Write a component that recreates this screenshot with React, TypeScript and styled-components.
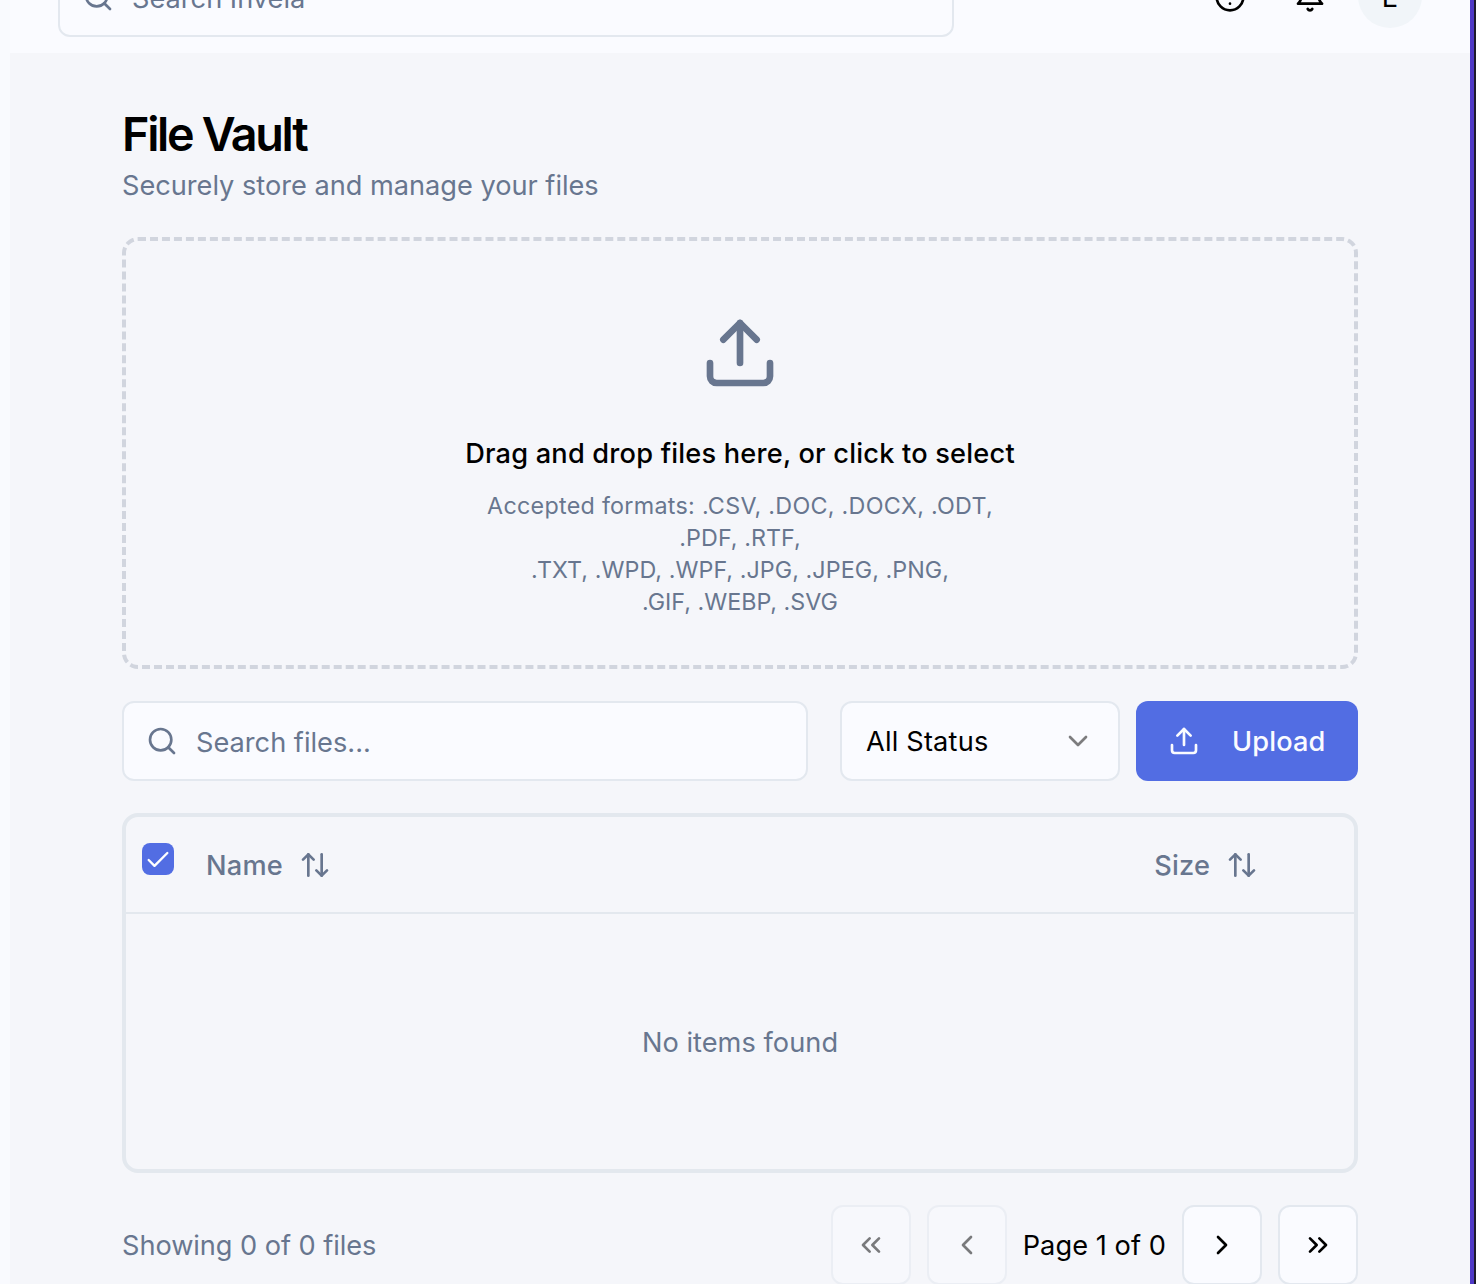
import React from "react";
import styled, { createGlobalStyle } from "styled-components";
import {
  ArrowUpDown, Check, ChevronDown, ChevronLeft, ChevronRight,
  ChevronsLeft, ChevronsRight, Search,
} from "lucide-react";

const GlobalStyle = createGlobalStyle`
  *, *::before, *::after { box-sizing: border-box; }
  body { margin: 0; overflow: hidden; background: #f9fafe; }
  button { font: inherit; }
  svg { display: block; flex: none; }
`;

const Shell = styled.div`
  display: flex;
  width: 1476px;
  height: 1284px;
  overflow: hidden;
  font-family: Inter, "Liberation Sans", sans-serif;
  font-size: 27.2px;
  line-height: 40px;
  color: #000;
`;

const Sidebar = styled.div`
  width: 10px;
  background: #f9fafe;
`;

const Content = styled.div`
  flex: 1;
  display: flex;
  flex-direction: column;
  min-width: 0;
  background: #f5f6fa;
`;

const WindowEdge = styled.div`
  width: 6px;
  background: #1e1b2b;
  border-left: 4px solid #4f39c6;
`;

const Header = styled.header`
  flex: none;
  display: flex;
  align-items: center;
  justify-content: space-between;
  height: 112px;
  margin-top: -59px;
  padding: 0 48px;
  background: #fafbff;
`;

const SearchBox = styled.label<{ $width: number }>`
  display: flex;
  align-items: center;
  gap: 18px;
  width: ${(p) => p.$width}px;
  height: 80px;
  padding: 0 22px;
  border: 2px solid #e3e8ef;
  border-radius: 12px;
  background: #fafbff;
  color: #68768f;
`;

const SearchInput = styled.input`
  flex: 1;
  min-width: 0;
  height: 40px;
  margin-top: 3px;
  padding: 0;
  border: 0;
  outline: 0;
  background: none;
  font: inherit;
  &::placeholder { color: #68768f; opacity: 1; }
`;

const HeaderActions = styled.div`
  display: flex;
  align-items: center;
`;

const IconButton = styled.button`
  display: grid;
  place-items: center;
  width: 80px;
  height: 80px;
  padding: 0;
  border: 0;
  background: none;
  color: inherit;
`;

const Avatar = styled.div`
  display: grid;
  place-items: center;
  width: 64px;
  height: 64px;
  margin: 0 0 2px 8px;
  padding-top: 3px;
  border-radius: 50%;
  background: #f1f5f9;
`;

const Main = styled.main`
  display: flex;
  flex-direction: column;
  padding: 49px 112px 0;
`;

const Title = styled.h1`
  margin: 0;
  font-size: 46.7px;
  line-height: 64px;
  font-weight: 600;
  letter-spacing: -2.3px;
`;

const Label = styled.span<{ $tracking?: number }>`
  letter-spacing: ${(p) => p.$tracking ?? 0}px;
  padding-top: 1px;
`;

const Subtitle = styled.p`
  margin: -0.5px 0 31.5px;
  color: #68768f;
  letter-spacing: -0.02px;
`;

const DropZone = styled.section`
  display: flex;
  flex-direction: column;
  align-items: center;
  height: 432px;
  padding-top: 72px;
  border: 4px dashed #d1d5de;
  border-radius: 16px;
  text-align: center;
  color: #68768f;
`;

const DropTitle = styled.p`
  margin: 40.5px 0 16px;
  font-weight: 500;
  letter-spacing: 0.2px;
  color: #000;
`;

const FormatLine = styled.span<{ $tracking: number }>`
  font-size: 23.3px;
  line-height: 32px;
  letter-spacing: ${(p) => p.$tracking}px;
`;

const Toolbar = styled.div`
  display: flex;
  margin: 32px 0;
`;

const StatusSelect = styled.button`
  display: flex;
  align-items: center;
  justify-content: space-between;
  width: 280px;
  height: 80px;
  margin: 0 16px 0 32px;
  padding: 0 24px;
  border: 2px solid #e3e8ef;
  border-radius: 12px;
  background: #fafbff;
  color: #000;
  svg { opacity: 0.5; }
`;

const UploadButton = styled.button`
  display: flex;
  align-items: center;
  gap: 32px;
  width: 222px;
  height: 80px;
  padding: 0 32px;
  border: 0;
  border-radius: 12px;
  background: #526de3;
  color: #fafbff;
  font-weight: 500;
`;

const Table = styled.section`
  height: 360px;
  border: 4px solid #e3e8ee;
  border-radius: 16px;
  color: #68768f;
`;

const TableHead = styled.div`
  display: flex;
  align-items: center;
  height: 97px;
  padding: 0 96px 0 16px;
  border-bottom: 2px solid #e3e8ee;
`;

const Checkbox = styled.span`
  display: grid;
  place-items: center;
  width: 32px;
  height: 32px;
  margin: 0 32px 12px 0;
  padding-top: 3px;
  border-radius: 8px;
  background: #526de3;
  color: #fff;
`;

const ColumnHead = styled.span<{ $grow?: boolean }>`
  display: flex;
  align-items: center;
  gap: 16px;
  flex: ${(p) => (p.$grow ? 1 : "none")};
  font-weight: 500;
  ${Label} { padding-top: 2px; }
`;

const EmptyState = styled.div`
  display: grid;
  place-items: center;
  height: 256px;
`;

const Footer = styled.footer`
  display: flex;
  align-items: center;
  justify-content: space-between;
  margin-top: 32px;
  color: #68768f;
`;

const Pager = styled.div`
  display: flex;
  align-items: center;
  gap: 16px;
  color: #000;
`;

const PageButton = styled.button`
  display: grid;
  place-items: center;
  width: 80px;
  height: 80px;
  padding: 0;
  border: 2px solid #e3e8ef;
  border-radius: 12px;
  background: #fafbff;
  color: #000;
  &:disabled { opacity: 0.5; }
`;

const StrokeIcon = ({ size, children }: { size: number; children: React.ReactNode }) => (
  <svg width={size} height={size} viewBox="0 0 24 24" fill="none" stroke="currentColor"
    strokeWidth={2} strokeLinecap="round" strokeLinejoin="round">
    {children}
  </svg>
);

const UploadIcon = ({ size }: { size: number }) => (
  <StrokeIcon size={size}>
    <path d="M21 15v4a2 2 0 0 1-2 2H5a2 2 0 0 1-2-2v-4" />
    <path d="m17 8-5-5-5 5" />
    <path d="M12 3v12" />
  </StrokeIcon>
);

const HelpIcon = () => (
  <StrokeIcon size={32}>
    <circle cx="12" cy="12" r="10" />
    <path d="M9.09 9a3 3 0 0 1 5.83 1c0 2-3 3-3 3" />
    <path d="M12 17h.01" />
  </StrokeIcon>
);

const BellIcon = () => (
  <StrokeIcon size={32}>
    <path d="M6 8a6 6 0 0 1 12 0c0 7 3 9 3 9H3s3-2 3-9" />
    <path d="M10.3 21a1.94 1.94 0 0 0 3.4 0" />
  </StrokeIcon>
);

export default function App() {
  return (
    <Shell>
      <GlobalStyle />
      <Sidebar />
      <Content>
        <Header>
          <SearchBox $width={896}>
            <Search size={32} />
            <SearchInput placeholder="Search Invela" />
          </SearchBox>
          <HeaderActions>
            <IconButton><HelpIcon /></IconButton>
            <IconButton><BellIcon /></IconButton>
            <Avatar>E</Avatar>
          </HeaderActions>
        </Header>
        <Main>
          <Title>File Vault</Title>
          <Subtitle>Securely store and manage your files</Subtitle>
          <DropZone>
            <UploadIcon size={80} />
            <DropTitle>Drag and drop files here, or click to select</DropTitle>
            <FormatLine $tracking={0.28}>Accepted formats: .CSV, .DOC, .DOCX, .ODT,</FormatLine>
            <FormatLine $tracking={0.05}>.PDF, .RTF,</FormatLine>
            <FormatLine $tracking={0.06}>.TXT, .WPD, .WPF, .JPG, .JPEG, .PNG,</FormatLine>
            <FormatLine $tracking={0}>.GIF, .WEBP, .SVG</FormatLine>
          </DropZone>
          <Toolbar>
            <SearchBox $width={686}>
              <Search size={32} />
              <SearchInput placeholder="Search files..." />
            </SearchBox>
            <StatusSelect>
              <Label $tracking={0.18}>All Status</Label>
              <ChevronDown size={32} />
            </StatusSelect>
            <UploadButton>
              <UploadIcon size={32} />
              <Label $tracking={0.12}>Upload</Label>
            </UploadButton>
          </Toolbar>
          <Table>
            <TableHead>
              <Checkbox><Check size={28} /></Checkbox>
              <ColumnHead $grow><Label $tracking={0.2}>Name</Label><ArrowUpDown size={32} /></ColumnHead>
              <ColumnHead><Label $tracking={0.15}>Size</Label><ArrowUpDown size={32} /></ColumnHead>
            </TableHead>
            <EmptyState><Label $tracking={0.04}>No items found</Label></EmptyState>
          </Table>
          <Footer>
            <Label $tracking={-0.06}>Showing 0 of 0 files</Label>
            <Pager>
              <PageButton disabled><ChevronsLeft size={32} /></PageButton>
              <PageButton disabled><ChevronLeft size={32} /></PageButton>
              <Label $tracking={0.06}>Page 1 of 0</Label>
              <PageButton><ChevronRight size={32} /></PageButton>
              <PageButton><ChevronsRight size={32} /></PageButton>
            </Pager>
          </Footer>
        </Main>
      </Content>
      <WindowEdge />
    </Shell>
  );
}
